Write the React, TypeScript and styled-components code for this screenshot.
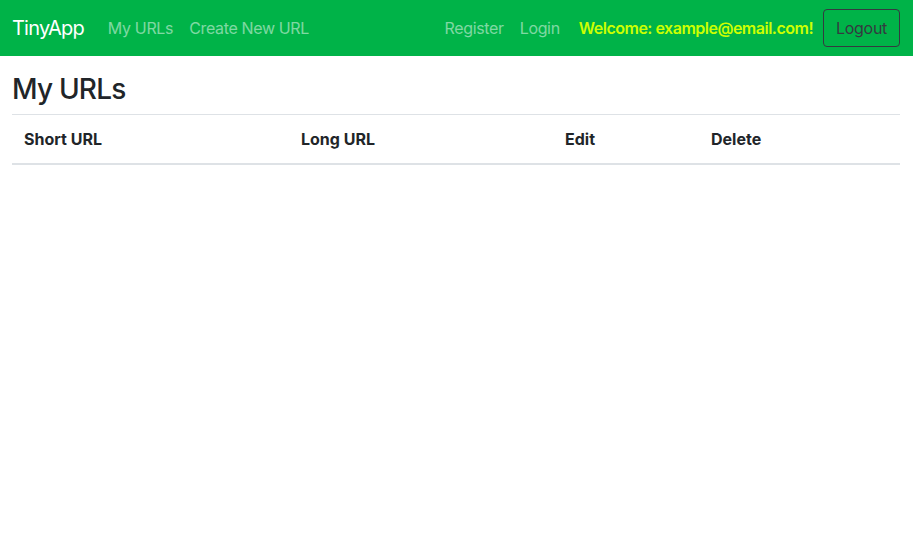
import React from "react";
import styled, { createGlobalStyle } from "styled-components";

const GlobalStyle = createGlobalStyle`
  * {
    box-sizing: border-box;
  }
  body {
    margin: 0;
    font-family: Inter, "Liberation Sans", sans-serif;
    font-size: 16px;
    line-height: 1.5;
    color: #212529;
    background: #ffffff;
  }
`;

const Navbar = styled.nav`
  display: flex;
  align-items: center;
  height: 56px;
  padding: 0 13px 0 12px;
  background: #00b348;
`;

const Brand = styled.a`
  font-size: 20px;
  letter-spacing: -0.8px;
  color: #ffffff;
  margin-right: 16px;
  text-decoration: none;
`;

const NavGroup = styled.div<{ $push?: boolean }>`
  display: flex;
  align-items: center;
  margin-left: ${(props) => (props.$push ? "auto" : "0")};
`;

const NavLink = styled.a`
  padding: 8px;
  letter-spacing: -0.35px;
  color: rgba(255, 255, 255, 0.5);
  text-decoration: none;
`;

const Welcome = styled.span`
  margin: 0 10px 0 11px;
  letter-spacing: -0.5px;
  color: #ccff00;
  font-weight: 600;
`;

const OutlineButton = styled.button`
  font-family: inherit;
  font-size: 16px;
  line-height: 1.5;
  letter-spacing: -0.3px;
  padding: 6px 12px;
  background: transparent;
  color: #343a40;
  border: 1px solid #343a40;
  border-radius: 4px;
  cursor: pointer;
`;

const Main = styled.main`
  padding: 17px 13px 0 12px;
`;

const Title = styled.h3`
  margin: 0 0 7px;
  font-size: 28px;
  font-weight: 500;
  line-height: 1.2;
  letter-spacing: -0.8px;
`;

const Table = styled.table`
  width: 100%;
  border-collapse: collapse;
`;

const HeadCell = styled.th<{ width: string }>`
  width: ${(props) => props.width};
  padding: 12px;
  text-align: left;
  font-weight: 700;
  border-top: 1px solid #dee2e6;
  border-bottom: 2px solid #dee2e6;
`;

const COLUMNS = [
  { label: "Short URL", width: "277px" },
  { label: "Long URL", width: "264px" },
  { label: "Edit", width: "146px" },
  { label: "Delete", width: "auto" },
];

const App = () => {
  return (
    <>
      <GlobalStyle />
      <Navbar>
        <Brand href="#">TinyApp</Brand>
        <NavGroup>
          <NavLink href="#">My URLs</NavLink>
          <NavLink href="#">Create New URL</NavLink>
        </NavGroup>
        <NavGroup $push>
          <NavLink href="#">Register</NavLink>
          <NavLink href="#">Login</NavLink>
          <Welcome>Welcome: example@email.com!</Welcome>
          <OutlineButton type="button">Logout</OutlineButton>
        </NavGroup>
      </Navbar>
      <Main>
        <Title>My URLs</Title>
        <Table>
          <thead>
            <tr>
              {COLUMNS.map((col) => (
                <HeadCell key={col.label} width={col.width}>
                  {col.label}
                </HeadCell>
              ))}
            </tr>
          </thead>
          <tbody></tbody>
        </Table>
      </Main>
    </>
  );
};

export default App;
